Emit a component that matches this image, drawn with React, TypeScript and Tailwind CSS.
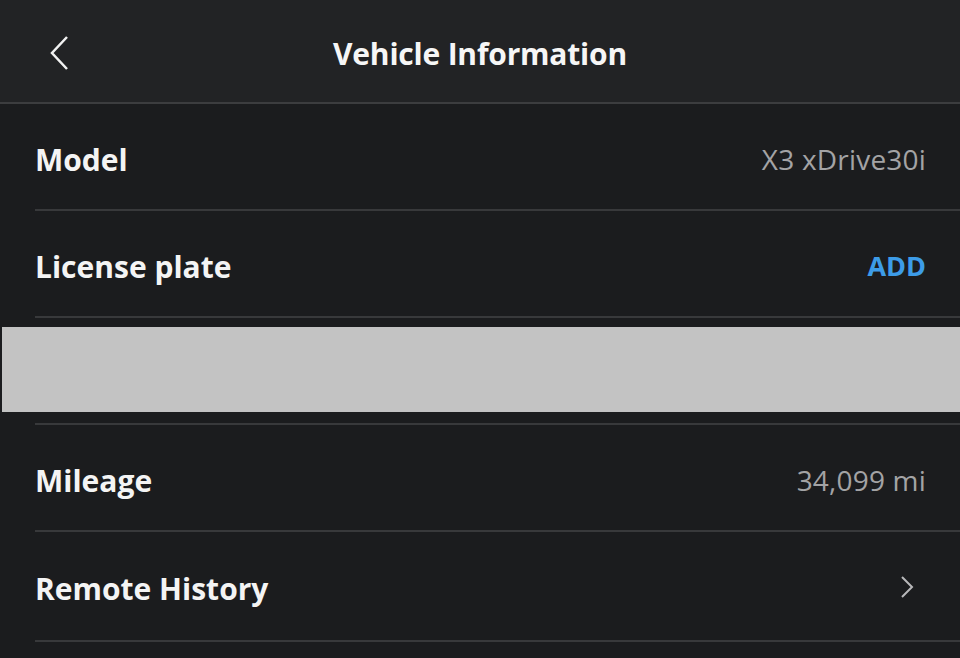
import React from 'react';

type Row = {
  label: string;
  value?: string;
  kind: 'text' | 'action' | 'link';
  tall?: boolean;
};

const rows: Row[] = [
  { label: 'Model', value: 'X3 xDrive30i', kind: 'text' },
  { label: 'License plate', value: 'ADD', kind: 'action' },
];

const lowerRows: Row[] = [
  { label: 'Mileage', value: '34,099 mi', kind: 'text' },
  { label: 'Remote History', kind: 'link', tall: true },
];

const InfoRow: React.FC<{ row: Row }> = ({ row }) => (
  <div
    className={`flex items-center justify-between border-b-2 border-[#38393b] pr-[34px] pt-[5px] ${
      row.tall ? 'h-[110px]' : 'h-[107px]'
    }`}
  >
    <span className="text-[30px] font-bold text-[#f4f4f4]">{row.label}</span>
    {row.kind === 'text' && <span className="text-[28px] tracking-[0.2px] text-[#a3a3a5]">{row.value}</span>}
    {row.kind === 'action' && <span className="text-[27px] font-bold text-[#3d9ce8]">{row.value}</span>}
    {row.kind === 'link' && (
      <svg width="14" height="24" viewBox="0 0 14 24" className="mb-[4px] mr-[12px]">
        <path d="M2 2l10 10L2 22" fill="none" stroke="#b8b8ba" strokeWidth="2" />
      </svg>
    )}
  </div>
);

const App: React.FC = () => {
  return (
    <div className="h-[658px] w-[960px] overflow-hidden bg-[#1b1c1e] font-['Open_Sans',sans-serif]">
      <header className="relative flex h-[104px] items-center justify-center border-b-2 border-[#3c3d3f] bg-[#222325] pt-1">
        <svg width="20" height="36" viewBox="0 0 20 36" className="absolute left-[49px] top-[35px]">
          <path d="M18 2L3 18l15 16" fill="none" stroke="#f2f2f2" strokeWidth="2.5" />
        </svg>
        <h1 className="text-[30px] font-bold tracking-[-0.2px] text-[#f6f6f6]">Vehicle Information</h1>
      </header>
      <div className="pl-[35px]">
        {rows.map((row) => (
          <InfoRow row={row} key={row.label} />
        ))}
      </div>
      <div className="pb-[11px] pt-[9px]">
        <div className="ml-[2px] h-[85px] bg-[#c3c3c3]" />
      </div>
      <div className="pl-[35px]">
        <div className="border-b-2 border-[#38393b]" />
        {lowerRows.map((row) => (
          <InfoRow row={row} key={row.label} />
        ))}
      </div>
    </div>
  );
};

export default App;
